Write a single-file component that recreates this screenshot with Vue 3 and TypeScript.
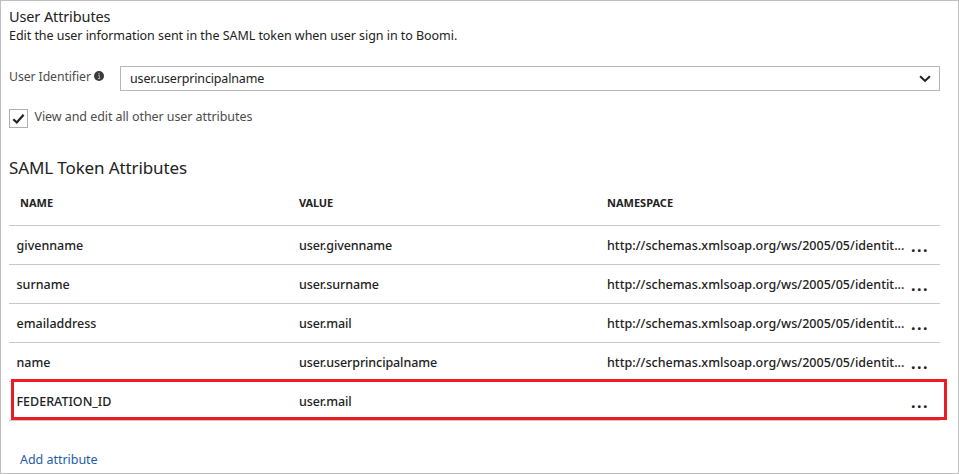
<script setup lang="ts">
import { ref } from 'vue'

interface TokenAttribute {
  name: string
  value: string
  namespace: string
  highlighted?: boolean
}

const schema = 'http://schemas.xmlsoap.org/ws/2005/05/identit...'
const identifier = ref('user.userprincipalname')
const showAll = ref(true)
const attributes = ref<TokenAttribute[]>([
  { name: 'givenname', value: 'user.givenname', namespace: schema },
  { name: 'surname', value: 'user.surname', namespace: schema },
  { name: 'emailaddress', value: 'user.mail', namespace: schema },
  { name: 'name', value: 'user.userprincipalname', namespace: schema },
  { name: 'FEDERATION_ID', value: 'user.mail', namespace: '', highlighted: true },
])
</script>

<template>
  <main class="panel">
    <h1 class="title">User Attributes</h1>
    <p class="description">Edit the user information sent in the SAML token when user sign in to Boomi.</p>

    <div class="field">
      <div class="field-label">
        <span>User Identifier</span>
        <svg class="info" viewBox="0 0 10 10">
          <circle cx="5" cy="5" r="5" fill="#3b3b3b" />
          <path d="M4.1 4.3h1.3v3.2M3.9 7.6h2.4" stroke="#b8b8b8" stroke-width="0.9" fill="none" />
          <rect x="4.4" y="1.9" width="1.2" height="1.2" fill="#b8b8b8" />
        </svg>
      </div>
      <div class="select" role="combobox">
        <span class="select-text">{{ identifier }}</span>
        <svg class="chevron" viewBox="0 0 12 8">
          <path d="M1.1 1.2L6 5.9L10.9 1.2" fill="none" stroke="#222" stroke-width="2.1" />
        </svg>
      </div>
    </div>

    <div class="toggle" @click="showAll = !showAll">
      <span class="checkbox" role="checkbox" :aria-checked="showAll">
        <svg v-if="showAll" class="check" viewBox="0 0 13 12">
          <path d="M1.3 6.2L4.8 9.5L11.6 1.8" fill="none" stroke="#222" stroke-width="2.2" />
        </svg>
      </span>
      <span class="toggle-label">View and edit all other user attributes</span>
    </div>

    <h2 class="subtitle">SAML Token Attributes</h2>

    <div class="table">
      <div class="row head">
        <span class="head-name">NAME</span>
        <span class="head-value">VALUE</span>
        <span>NAMESPACE</span>
      </div>
      <div
        v-for="item in attributes"
        :key="item.name"
        class="row"
        :class="{ highlighted: item.highlighted }"
      >
        <span class="name">{{ item.name }}</span>
        <span class="value">{{ item.value }}</span>
        <span class="namespace">{{ item.namespace }}</span>
        <span class="more">...</span>
      </div>
    </div>

    <a class="add">Add attribute</a>
  </main>
</template>

<style>
body {
  background: #fff;
}
</style>

<style scoped>
.panel {
  box-sizing: border-box;
  width: 959px;
  height: 474px;
  padding: 5px 18px 0 8px;
  border: 1px solid #bfbfbf;
  background: #fff;
  color: #222;
  font-family: 'Noto Sans', 'Open Sans', sans-serif;
  font-size: 12.5px;
  white-space: nowrap;
  overflow: hidden;
}

.title {
  margin: 0;
  font-size: 14.5px;
  font-weight: 400;
  line-height: 20px;
  letter-spacing: -0.12px;
}

.description {
  margin: 1px 0 0;
  line-height: 18px;
  letter-spacing: -0.05px;
}

.field {
  display: flex;
  margin-top: 21px;
}

.field-label {
  display: flex;
  align-items: center;
  width: 111px;
  height: 20px;
  color: #4c4c4c;
  font-size: 12.3px;
  letter-spacing: -0.1px;
}

.info {
  width: 10px;
  height: 10px;
  margin-left: 3px;
}

.select {
  display: flex;
  flex: 1;
  align-items: center;
  justify-content: space-between;
  box-sizing: border-box;
  height: 25px;
  padding: 0 8px 0 9px;
  border: 1px solid #b7b7b7;
}

.select-text {
  letter-spacing: -0.16px;
}

.chevron {
  width: 12px;
  height: 8px;
}

.toggle {
  display: flex;
  margin-top: 18px;
}

.checkbox {
  display: flex;
  align-items: center;
  justify-content: center;
  box-sizing: border-box;
  width: 19px;
  height: 19px;
  border: 1px solid #b0b0b0;
}

.check {
  width: 13px;
  height: 12px;
}

.toggle-label {
  margin-left: 6.5px;
  color: #4c4c4c;
  line-height: 15px;
  letter-spacing: -0.07px;
}

.subtitle {
  margin: 27px 0 0;
  font-size: 17px;
  font-weight: 400;
  line-height: 26px;
  letter-spacing: -0.12px;
}

.table {
  font-weight: 500;
}

.row {
  position: relative;
  display: grid;
  grid-template-columns: 290px 308px 304px 1fr;
  align-items: center;
  box-sizing: border-box;
  height: 39px;
  border-bottom: 1px solid #c8c8c8;
}

.head {
  height: 45px;
  padding-bottom: 2px;
  font-size: 11px;
  font-weight: 700;
}

.head-name {
  padding-left: 11px;
}

.head-value {
  letter-spacing: -0.2px;
}

.name {
  padding-left: 7.5px;
}

.value {
  letter-spacing: -0.1px;
}

.namespace {
  letter-spacing: 0.03px;
}

.more {
  padding-top: 2px;
  font-size: 16px;
  font-weight: 700;
  line-height: 20px;
  letter-spacing: 1.5px;
}

/* Outline laid over the row and its separators */
.highlighted::after {
  content: '';
  position: absolute;
  top: -3px;
  right: -7px;
  bottom: 0;
  left: 2px;
  border: 3px solid #ed1c24;
}

.add {
  display: block;
  margin: 29px 0 0 11px;
  color: #1e5ca8;
  line-height: 20px;
  letter-spacing: -0.03px;
}
</style>
